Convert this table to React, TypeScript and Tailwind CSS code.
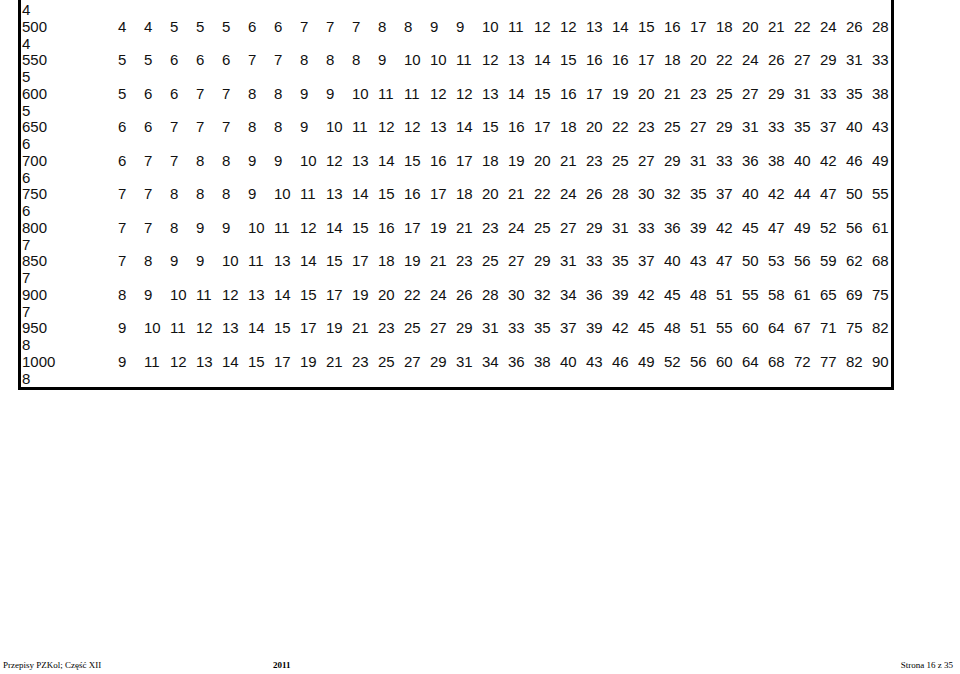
// Page 16 of the PZKol rules: tail end of the gear/size table plus the page footer.
// The table continues from the previous page, so there is no top border and the
// first line is the leftover "4" of the 450 row.

type Row = { size: string; sub: string; cells: number[] };

const rows: Row[] = [
  { size: "500", sub: "4", cells: [4, 4, 5, 5, 5, 6, 6, 7, 7, 7, 8, 8, 9, 9, 10, 11, 12, 12, 13, 14, 15, 16, 17, 18, 20, 21, 22, 24, 26, 28] },
  { size: "550", sub: "5", cells: [5, 5, 6, 6, 6, 7, 7, 8, 8, 8, 9, 10, 10, 11, 12, 13, 14, 15, 16, 16, 17, 18, 20, 22, 24, 26, 27, 29, 31, 33] },
  { size: "600", sub: "5", cells: [5, 6, 6, 7, 7, 8, 8, 9, 9, 10, 11, 11, 12, 12, 13, 14, 15, 16, 17, 19, 20, 21, 23, 25, 27, 29, 31, 33, 35, 38] },
  { size: "650", sub: "6", cells: [6, 6, 7, 7, 7, 8, 8, 9, 10, 11, 12, 12, 13, 14, 15, 16, 17, 18, 20, 22, 23, 25, 27, 29, 31, 33, 35, 37, 40, 43] },
  { size: "700", sub: "6", cells: [6, 7, 7, 8, 8, 9, 9, 10, 12, 13, 14, 15, 16, 17, 18, 19, 20, 21, 23, 25, 27, 29, 31, 33, 36, 38, 40, 42, 46, 49] },
  { size: "750", sub: "6", cells: [7, 7, 8, 8, 8, 9, 10, 11, 13, 14, 15, 16, 17, 18, 20, 21, 22, 24, 26, 28, 30, 32, 35, 37, 40, 42, 44, 47, 50, 55] },
  { size: "800", sub: "7", cells: [7, 7, 8, 9, 9, 10, 11, 12, 14, 15, 16, 17, 19, 21, 23, 24, 25, 27, 29, 31, 33, 36, 39, 42, 45, 47, 49, 52, 56, 61] },
  { size: "850", sub: "7", cells: [7, 8, 9, 9, 10, 11, 13, 14, 15, 17, 18, 19, 21, 23, 25, 27, 29, 31, 33, 35, 37, 40, 43, 47, 50, 53, 56, 59, 62, 68] },
  { size: "900", sub: "7", cells: [8, 9, 10, 11, 12, 13, 14, 15, 17, 19, 20, 22, 24, 26, 28, 30, 32, 34, 36, 39, 42, 45, 48, 51, 55, 58, 61, 65, 69, 75] },
  { size: "950", sub: "8", cells: [9, 10, 11, 12, 13, 14, 15, 17, 19, 21, 23, 25, 27, 29, 31, 33, 35, 37, 39, 42, 45, 48, 51, 55, 60, 64, 67, 71, 75, 82] },
  { size: "1000", sub: "8", cells: [9, 11, 12, 13, 14, 15, 17, 19, 21, 23, 25, 27, 29, 31, 34, 36, 38, 40, 43, 46, 49, 52, 56, 60, 64, 68, 72, 77, 82, 90] },
];

const TableRow = ({ row }: { row: Row }) => (
  <div>
    <div className="flex">
      <div className="w-[97px] shrink-0 pl-[1px]">{row.size}</div>
      <div className="grid grid-cols-[repeat(29,26px)_19px]">
        {row.cells.map((c, i) => (
          <span key={i}>{c}</span>
        ))}
      </div>
    </div>
    <div className="pl-[1px]">{row.sub}</div>
  </div>
);

export default function App() {
  return (
    <div className="flex h-[674px] w-[960px] flex-col overflow-hidden bg-white text-[#111]">
      <div className="ml-[18px] w-[876px] border-x-[3px] border-b-[3px] border-black pt-[2px] font-['Liberation_Sans',Arial,sans-serif] text-[15px] leading-[16.75px]">
        <div className="pl-[1px]">4</div>
        {rows.map((r) => (
          <TableRow key={r.size} row={r} />
        ))}
      </div>

      <footer className="mt-auto flex pb-[3px] font-['Liberation_Serif','Times_New_Roman',serif] text-[9px] leading-[11px] text-black">
        <span className="w-[273px] pl-[3px]">Przepisy PZKol; Część XII</span>
        <span className="font-bold">2011</span>
        <span className="flex-1 pr-[7px] text-right">Strona 16 z 35</span>
      </footer>
    </div>
  );
}
